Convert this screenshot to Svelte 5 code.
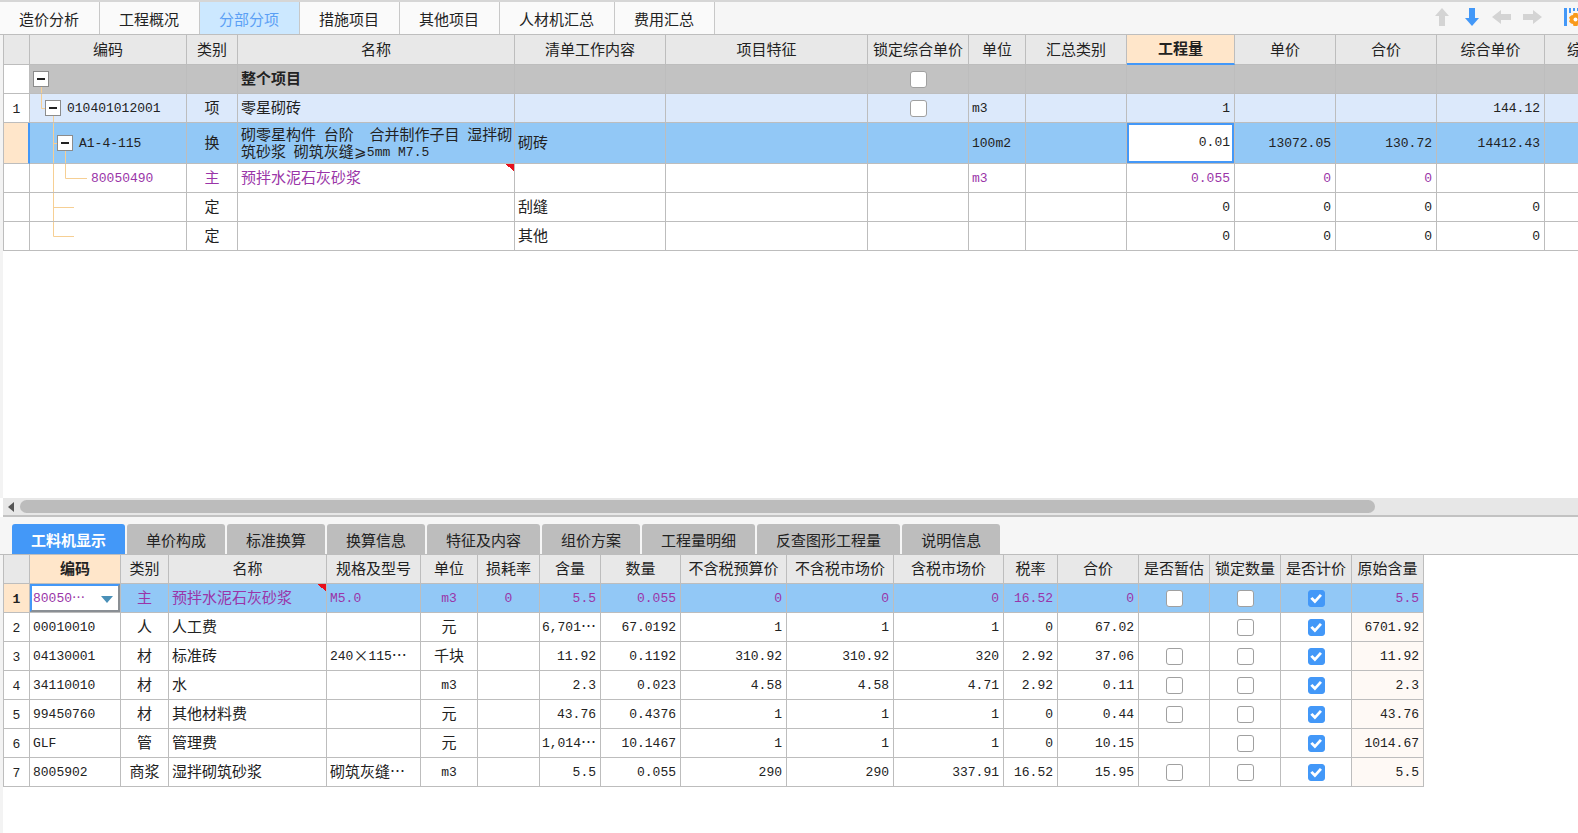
<script>
  const TABS = ["造价分析", "工程概况", "分部分项", "措施项目", "其他项目", "人材机汇总", "费用汇总"];
  let tab = $state("分部分项");

  // [标题, 列宽, 对齐]
  const COLS = [
    ["编码", 157, "l"],
    ["类别", 51, "c"],
    ["名称", 277, "l"],
    ["清单工作内容", 151, "l"],
    ["项目特征", 202, "l"],
    ["锁定综合单价", 101, "c"],
    ["单位", 57, "l"],
    ["汇总类别", 101, "l"],
    ["工程量", 108, "r"],
    ["单价", 101, "r"],
    ["合价", 101, "r"],
    ["综合单价", 108, "r"],
    ["综合合价", 105, "r"],
  ];

  // level: 缩进层级, lines: 树形连接线
  const ROWS = [
    { kind: "root", level: 0, fold: true, lines: "M11.5 22V29", lock: true, cells: ["", "", "整个项目"] },
    {
      kind: "item", no: "1", level: 1, fold: true, lines: "M11.5 0V14.5H15 M23.5 22V29", lock: true,
      cells: ["010401012001", "项", "零星砌砖", "", "", "", "m3", "", "1", "", "", "144.12", ""],
    },
    {
      kind: "current", level: 2, fold: true, lines: "M23.5 0V41 M23.5 20.5H27 M35.5 28V41",
      cells: [
        "A1-4-115", "换", "砌零星构件 台阶  合并制作子目 湿拌砌\n筑砂浆 砌筑灰缝⩾5mm M7.5",
        "砌砖", "", "", "100m2", "", "0.01", "13072.05", "130.72", "14412.43", "",
      ],
    },
    {
      kind: "main", level: 3, flag: true, lines: "M23.5 0V29 M35.5 0V14.5H57",
      cells: ["80050490", "主", "预拌水泥石灰砂浆", "", "", "", "m3", "", "0.055", "0", "0", "", ""],
    },
    { kind: "", level: 3, lines: "M23.5 0V29 M23.5 14.5H44", cells: ["", "定", "", "刮缝", "", "", "", "", "0", "0", "0", "0", ""] },
    { kind: "", level: 3, lines: "M23.5 0V14.5H44", cells: ["", "定", "", "其他", "", "", "", "", "0", "0", "0", "0", ""] },
  ];

  const SUBTABS = [
    "工料机显示", "单价构成", "标准换算", "换算信息", "特征及内容",
    "组价方案", "工程量明细", "反查图形工程量", "说明信息",
  ];
  let subtab = $state("工料机显示");

  const RES_COLS = [
    ["编码", 91, "l"],
    ["类别", 48, "c"],
    ["名称", 158, "l"],
    ["规格及型号", 94, "l"],
    ["单位", 57, "c"],
    ["损耗率", 62, "c"],
    ["含量", 61, "r"],
    ["数量", 80, "r"],
    ["不含税预算价", 106, "r"],
    ["不含税市场价", 107, "r"],
    ["含税市场价", 110, "r"],
    ["税率", 54, "r"],
    ["合价", 81, "r"],
    ["是否暂估", 71, "c"],
    ["锁定数量", 71, "c"],
    ["是否计价", 71, "c"],
    ["原始含量", 72, "r"],
  ];

  // true / false 为勾选框, null 为不显示
  const RES = [
    ["80050⋯", "主", "预拌水泥石灰砂浆", "M5.0", "m3", "0", "5.5", "0.055", "0", "0", "0", "16.52", "0", false, false, true, "5.5"],
    ["00010010", "人", "人工费", "", "元", "", "6,701…", "67.0192", "1", "1", "1", "0", "67.02", null, false, true, "6701.92"],
    ["04130001", "材", "标准砖", "240×115…", "千块", "", "11.92", "0.1192", "310.92", "310.92", "320", "2.92", "37.06", false, false, true, "11.92"],
    ["34110010", "材", "水", "", "m3", "", "2.3", "0.023", "4.58", "4.58", "4.71", "2.92", "0.11", false, false, true, "2.3"],
    ["99450760", "材", "其他材料费", "", "元", "", "43.76", "0.4376", "1", "1", "1", "0", "0.44", false, false, true, "43.76"],
    ["GLF", "管", "管理费", "", "元", "", "1,014…", "10.1467", "1", "1", "1", "0", "10.15", null, false, true, "1014.67"],
    ["8005902", "商浆", "湿拌砌筑砂浆", "砌筑灰缝…", "m3", "", "5.5", "0.055", "290", "290", "337.91", "16.52", "15.95", false, false, true, "5.5"],
  ];

  // 数字和字母用等宽字体, 汉字用正文字体
  const runs = (s) => s.split(/([\x20-\x7e]+)/).filter(Boolean);
  const isLatin = (s) => /^[\x20-\x7e]+$/.test(s);
</script>

{#snippet mixed(s)}{#each runs(s) as r}{#if isLatin(r)}<span class="num">{r}</span>{:else}{r}{/if}{/each}{/snippet}

<div class="app">
  <nav class="topbar">
    <div class="tabs">
      {#each TABS as t}
        <button class:active={tab === t} onclick={() => (tab = t)}>{t}</button>
      {/each}
    </div>
    <div class="tools">
      <button aria-label="上移"><svg viewBox="0 0 20 20"><path d="M10 1L17 9H13V19H7V9H3Z" /></svg></button>
      <button aria-label="下移" class="on"><svg viewBox="0 0 20 20"><path d="M10 19L17 11H13V1H7V11H3Z" /></svg></button>
      <button aria-label="左移"><svg viewBox="0 0 20 20"><path d="M0 10L9 3V7H19V13H9V17Z" /></svg></button>
      <button aria-label="右移"><svg viewBox="0 0 20 20"><path d="M20 10L11 3V7H1V13H11V17Z" /></svg></button>
      <button aria-label="列设置" class="setup">
        <svg viewBox="0 0 20 20">
          <path class="bar" d="M0 1H3V19H0Z M5 1H7V6H5Z M9 1H11V4H9Z M13 1H15V4H13Z" />
          <path class="gear" d="M9.5 6H13.5L14 8L16.5 9L18 12.5L16.5 16L14 17L13.5 19H9.5L9 17L7 16.5L5 14.5L6 12.5L5 10.5L7 8.5L9 8Z" />
          <circle cx="11.5" cy="12.5" r="2" fill="#fff" />
        </svg>
      </button>
    </div>
  </nav>

  <section class="upper">
    <table>
      <colgroup>
        <col style:width="27px" />
        {#each COLS as c}<col style:width="{c[1]}px" />{/each}
      </colgroup>
      <thead>
        <tr>
          <th class="no"></th>
          {#each COLS as c}<th class:focus={c[0] === "工程量"}>{c[0]}</th>{/each}
        </tr>
      </thead>
      <tbody>
        {#each ROWS as row}
          <tr class={row.kind}>
            <td class="no">{@render mixed(row.no ?? "")}</td>
            {#each COLS as c, i}
              {@const v = row.cells[i] ?? ""}
              {#if i === 0}
                <td class="tree">
                  <svg width="80" height="41"><path d={row.lines} /></svg>
                  <div class="node" style:padding-left="{3 + row.level * 12}px">
                    {#if row.fold}
                      <button class="fold" aria-label="折叠"></button>
                    {:else}
                      <i class="fold-gap"></i>
                    {/if}
                    <span class="code">{@render mixed(v)}</span>
                  </div>
                </td>
              {:else if row.kind === "current" && c[0] === "工程量"}
                <td class="edit"><input type="text" value={v} aria-label="工程量" /></td>
              {:else if i === 5}
                <td class="c">{#if row.lock}<input type="checkbox" aria-label="锁定综合单价" />{/if}</td>
              {:else}
                <td class={c[2]} class:flag={row.flag && i === 2}>{@render mixed(v)}</td>
              {/if}
            {/each}
          </tr>
        {/each}
      </tbody>
    </table>
  </section>

  <div class="scroll">
    <svg width="6" height="10" viewBox="0 0 6 10"><path d="M6 0V10L0 5Z" /></svg>
    <div class="track"><div class="thumb"></div></div>
  </div>

  <section class="lower">
    <div class="subtabs">
      {#each SUBTABS as t}
        <button class:active={subtab === t} onclick={() => (subtab = t)}>{t}</button>
      {/each}
    </div>
    <div class="sheet">
      <table>
        <colgroup>
          <col style:width="27px" />
          {#each RES_COLS as c}<col style:width="{c[1]}px" />{/each}
        </colgroup>
        <thead>
          <tr>
            <th class="no"></th>
            {#each RES_COLS as c, i}<th class:focus={i === 0}>{c[0]}</th>{/each}
          </tr>
        </thead>
        <tbody>
          {#each RES as row, n}
            <tr class:picked={n === 0}>
              <td class="no">{@render mixed(String(n + 1))}</td>
              {#each row as v, i}
                {#if n === 0 && i === 0}
                  <td class="pick">
                    <select aria-label="编码"><option>{v}</option></select>
                    <svg width="12" height="7" viewBox="0 0 12 7"><path d="M0 0H12L6 7Z" /></svg>
                  </td>
                {:else if typeof v === "boolean"}
                  <td class="c"><input type="checkbox" checked={v} aria-label={RES_COLS[i][0]} /></td>
                {:else}
                  <td class={RES_COLS[i][2]} class:flag={n === 0 && i === 2} class:origin={i === 16}>{@render mixed(v ?? "")}</td>
                {/if}
              {/each}
            </tr>
          {/each}
        </tbody>
      </table>
    </div>
  </section>
</div>

<style>
  :global(body) {
    background: #fff;
  }
  .app {
    display: flex;
    flex-direction: column;
    min-height: 100vh;
    overflow: hidden;
    font-family: "Noto Sans CJK SC", sans-serif;
    font-size: 15px;
    line-height: 17px;
    color: #222;
  }
  .app * {
    box-sizing: border-box;
  }
  button,
  input,
  select {
    font: inherit;
    color: inherit;
    margin: 0;
  }
  .num {
    font-family: "Liberation Mono", monospace;
    font-size: 13px;
    line-height: 8px;
    vertical-align: 1px;
  }

  /* 顶部页签 */
  .topbar {
    display: flex;
    height: 35px;
    background: #f6f6f6;
    border-top: 2px solid #d6d6d6;
    border-bottom: 1px solid #bebebe;
    overflow: hidden;
  }
  .tabs {
    display: flex;
  }
  .tabs button {
    padding: 0 20px 0 19px;
    border: 0;
    border-right: 1px solid #c8c8c8;
    background: #fafafa;
    white-space: nowrap;
  }
  .tabs button.active {
    background: #cce8ff;
    color: #5b9ff5;
  }
  .tools {
    display: flex;
    align-items: center;
    gap: 10px;
    margin-left: auto;
    margin-right: -6px;
    padding-bottom: 2px;
  }
  .tools button {
    width: 20px;
    height: 20px;
    padding: 0;
    border: 0;
    background: none;
  }
  .tools svg {
    display: block;
    width: 20px;
    height: 20px;
    fill: #d4d4d4;
  }
  .tools .on svg,
  .bar {
    fill: #4398f8;
  }
  .gear {
    fill: #f99a1c;
  }
  .tools .setup {
    margin-left: 12px;
  }

  /* 表格 */
  table {
    table-layout: fixed;
    width: 0;
    border-collapse: separate;
    border-spacing: 0;
  }
  th,
  td {
    height: 29px;
    padding: 0 0 3px;
    border-right: 1px solid #bdbdbd;
    border-bottom: 1px solid #bdbdbd;
    white-space: nowrap;
    overflow: hidden;
  }
  th {
    background: #e8e8e8;
    font-weight: 400;
    text-align: center;
  }
  th.focus {
    background: #ffe6ca;
    font-weight: 700;
  }
  .no {
    padding-bottom: 1px;
    border-left: 1px solid #bdbdbd;
    text-align: center;
  }
  .l {
    padding-left: 3px;
    white-space: pre;
  }
  .c {
    text-align: center;
  }
  .r {
    padding-right: 4px;
    text-align: right;
  }
  .flag {
    background: linear-gradient(to top right, transparent 50%, #e8101c 50%) top right / 8px 8px no-repeat;
  }
  input[type="checkbox"] {
    appearance: none;
    display: block;
    width: 17px;
    height: 17px;
    margin: 4px auto 0;
    border: 1px solid #a0a0a0;
    border-radius: 3px;
    background: #fff;
  }
  input[type="checkbox"]:checked {
    border-color: #4398f8;
    background: #4398f8;
  }
  input[type="checkbox"]:checked::after {
    content: "";
    display: block;
    height: 15px;
    background: #fff;
    clip-path: polygon(12% 52%, 26% 40%, 43% 57%, 76% 20%, 90% 32%, 43% 83%);
  }

  .upper {
    flex: 1;
    padding-left: 3px;
    overflow: hidden;
    background: linear-gradient(to right, #f3f3f3 3px, #fff 3px);
  }
  .upper th {
    height: 30px;
  }
  .upper th.focus {
    border-bottom: 2px solid #4398f8;
  }
  .root td {
    background: #c2c2c2;
    border-right-color: #bdbdbd;
    font-weight: 700;
  }
  .item td {
    background: #dce9fb;
  }
  .current td {
    height: 41px;
    background: #92c8f6;
  }
  .root .no,
  .item .no {
    background: #fff;
    font-weight: 400;
  }
  .current .no {
    background: #ffe6ca;
    border-right: 2px solid #4398f8;
  }
  .main td {
    color: #9a35a8;
  }
  .tree,
  .edit,
  .pick {
    padding: 0;
  }
  .tree {
    position: relative;
  }
  .tree svg {
    position: absolute;
    left: 0;
    top: 0;
    fill: none;
    stroke: #f6cf94;
  }
  .node {
    position: relative;
    display: flex;
    align-items: center;
  }
  .code {
    padding-bottom: 3px;
  }
  .fold,
  .fold-gap {
    flex: none;
    width: 16px;
    height: 16px;
    margin-right: 6px;
  }
  .fold {
    padding: 0;
    border: 1px solid #8c8c8c;
    background: linear-gradient(#222, #222) center / 8px 2px no-repeat #fff;
  }
  .edit input {
    display: block;
    width: 100%;
    height: 40px;
    padding: 0 2px 2px;
    border: 2px solid #4398f8;
    border-radius: 0;
    outline: 0;
    background: #fff;
    font-family: "Liberation Mono", monospace;
    font-size: 13px;
    text-align: right;
  }

  /* 横向滚动条 */
  .scroll {
    display: flex;
    align-items: center;
    gap: 6px;
    height: 19px;
    margin-left: 3px;
    padding-left: 5px;
    background: #e7e7e7;
    border-bottom: 2px solid #c2c2c2;
  }
  .scroll svg {
    fill: #555;
  }
  .track {
    flex: 1;
  }
  .thumb {
    width: 87%;
    height: 13px;
    border-radius: 7px;
    background: #bcbcbc;
  }

  /* 下方明细 */
  .lower {
    padding-bottom: 46px;
    background: linear-gradient(to right, #f3f3f3 3px, #fff 3px);
  }
  .subtabs {
    display: flex;
    gap: 2px;
    padding: 7px 0 0 12px;
    background: #f6f6f6;
    border-bottom: 1px solid #bdbdbd;
  }
  .subtabs button {
    height: 30px;
    padding: 0 19px;
    border: 0;
    border-radius: 3px 3px 0 0;
    background: #bdbdbd;
    white-space: nowrap;
  }
  .subtabs button.active {
    background: #4398f8;
    color: #fff;
    font-weight: 700;
  }
  .sheet {
    padding-left: 3px;
  }
  .picked td {
    background-color: #92c8f6;
    color: #9a35a8;
  }
  .picked .no {
    background: #ffe6ca;
    color: #222;
    font-weight: 700;
  }
  .origin {
    background: #fef9f5;
  }
  .pick {
    position: relative;
  }
  .pick select {
    appearance: none;
    display: block;
    width: 100%;
    height: 28px;
    padding: 0 1px;
    border: 2px solid #4398f8;
    border-right-color: #8a8f94;
    border-bottom-color: #8a8f94;
    border-radius: 0;
    background: #fff;
    font-family: "Liberation Mono", "Noto Sans CJK SC", monospace;
    font-size: 13px;
  }
  .pick svg {
    position: absolute;
    right: 7px;
    top: 12px;
    fill: #4a90b8;
    pointer-events: none;
  }
</style>
